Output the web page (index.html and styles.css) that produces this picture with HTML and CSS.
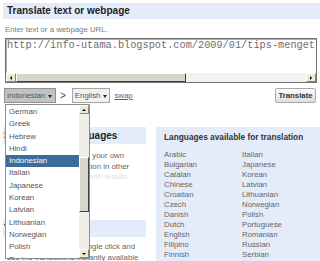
FILE: index.html
```html
<!DOCTYPE html>
<html>

<head>
  <meta charset='utf-8'>
  <title>Translate text or webpage</title>
  <meta name='viewport' content='width=device-width, initial-scale=1'>
  <link rel="stylesheet" href="styles.css">
</head>

<body>
  <div class="page">
    <h2 class="title-bar">Translate text or webpage</h2>
    <p class="hint">Enter text or a webpage URL.</p>
    <div class="editor">
      <div class="editor-text">http://info-utama.blogspot.com/2009/01/tips-menget</div>
      <div class="hscroll">
        <span class="sb-btn sb-left"></span>
        <span class="sb-thumb"></span>
        <span class="sb-track"></span>
        <span class="sb-btn sb-right"></span>
      </div>
    </div>

    <div class="controls">
      <div class="select open">Indonesian <span class="caret"></span></div>
      <span class="to">&gt;</span>
      <div class="select">English <span class="caret"></span></div>
      <a class="swap" href="#">swap</a>
      <button class="translate-btn">Translate</button>
    </div>

    <div class="columns">
      <div class="left-col">
        <h3 class="left-bar">Search other languages</h3>
        <p class="left-text">
          Search for answers with your own<br>
          terms and see a translation in other<br>
          <span class="faint">languages side by side with results</span>
        </p>
        <h3 class="left-bar second">Tools</h3>
        <p class="left-text tight">
          Translate sites with a single click and<br>
          see the translations instantly available
        </p>
      </div>
      <div class="lang-box">
        <h3>Languages available for translation</h3>
        <div class="lang-lists">
          <ul>
            <li>Arabic</li>
            <li>Bulgarian</li>
            <li>Catalan</li>
            <li>Chinese</li>
            <li>Croatian</li>
            <li>Czech</li>
            <li>Danish</li>
            <li>Dutch</li>
            <li>English</li>
            <li>Filipino</li>
            <li>Finnish</li>
            <li>French</li>
          </ul>
          <ul>
            <li>Italian</li>
            <li>Japanese</li>
            <li>Korean</li>
            <li>Latvian</li>
            <li>Lithuanian</li>
            <li>Norwegian</li>
            <li>Polish</li>
            <li>Portuguese</li>
            <li>Romanian</li>
            <li>Russian</li>
            <li>Serbian</li>
            <li>Slovak</li>
          </ul>
        </div>
      </div>
    </div>

    <!-- open list of the "from" select -->
    <div class="dropdown">
      <ul class="dropdown-items">
        <li>German</li>
        <li>Greek</li>
        <li>Hebrew</li>
        <li>Hindi</li>
        <li class="selected">Indonesian</li>
        <li>Italian</li>
        <li>Japanese</li>
        <li>Korean</li>
        <li>Latvian</li>
        <li>Lithuanian</li>
        <li>Norwegian</li>
        <li>Polish</li>
        <li>Portuguese</li>
      </ul>
      <div class="vscroll">
        <span class="vs-btn vs-up"></span>
        <span class="vs-gap"></span>
        <span class="vs-thumb"></span>
        <span class="vs-track"></span>
        <span class="vs-btn vs-down"></span>
      </div>
    </div>
  </div>
</body>

</html>
```

FILE: styles.css
```css
* {
  box-sizing: border-box;
  margin: 0;
  padding: 0;
}

body {
  font-family: "Liberation Sans", Arial, sans-serif;
  font-size: 7.8px;
  color: #666;
  background: #fff;
  overflow: hidden;
}

.page {
  position: relative;
  padding: 3px 0 0 3px;
}

.title-bar {
  background: #e5ecf9;
  height: 16px;
  line-height: 16px;
  padding-left: 4px;
  font-size: 10px;
  font-weight: bold;
  color: #222;
}

.hint {
  margin: 6px 0 0 2px;
  line-height: 10px;
  color: #7a7a7a;
}

/* text area */
.editor {
  display: flex;
  flex-direction: column;
  margin: 3px 0 0 2px;
  width: 312px;
  height: 45px;
  border: 1px solid #707070;
  box-shadow: inset 1px 1px 0 #b0b0b0;
}

.editor-text {
  flex: 1;
  padding: 1px 0 0 1px;
  font-family: "Liberation Mono", monospace;
  font-size: 10.27px;
  line-height: 10px;
  color: #6e6e6e;
  white-space: nowrap;
  overflow: hidden;
}

.hscroll {
  display: flex;
  height: 9px;
  background: #f3f2ec;
}

.sb-btn,
.vs-btn {
  position: relative;
  background: #ece9d8;
  border: 1px solid;
  border-color: #fff #8a877c #8a877c #fff;
}

.sb-btn {
  width: 10px;
}

.sb-btn::after,
.vs-btn::after {
  content: "";
  position: absolute;
  left: 50%;
  top: 50%;
  border: 2px solid transparent;
}

.sb-left::after {
  margin: -2px 0 0 -3px;
  border-right-color: #000;
}

.sb-right::after {
  margin: -2px 0 0 -1px;
  border-left-color: #000;
}

.sb-thumb {
  width: 170px;
  background: #d8d5cc;
  border: 1px solid;
  border-color: #fff #404040 #404040 #fff;
}

.sb-track {
  flex: 1;
}

/* selects row */
.controls {
  display: flex;
  align-items: center;
  margin: 5px 0 0 1px;
  padding-right: 4px;
  height: 15px;
}

.select {
  display: flex;
  align-items: center;
  gap: 3px;
  height: 15px;
  padding: 0 2px;
  border: 1px solid #a5a5a5;
  background: #f1f1f1;
  color: #555;
}

.select.open {
  width: 52px;
  background: #c2c2c2;
  border-color: #909090;
}

.caret {
  border: 2.5px solid transparent;
  border-top: 3px solid #222;
  margin-top: 3px;
}

.to {
  margin: 0 6px 0 4px;
  font-size: 10px;
  color: #444;
}

.swap {
  margin-left: 4px;
  color: #6b4fa0;
}

.translate-btn {
  margin-left: auto;
  width: 41px;
  height: 15px;
  font-family: inherit;
  font-size: 7.8px;
  font-weight: bold;
  color: #333;
  background: linear-gradient(#fcfcfc, #dedede);
  border: 1px solid #a8a8a8;
  border-radius: 2px;
}

/* lower part */
.columns {
  display: flex;
  gap: 10px;
  margin-top: 24px;
}

.left-col {
  width: 150px;
}

.left-bar {
  background: #e5ecf9;
  height: 17px;
  line-height: 17px;
  padding-left: 1px;
  font-size: 10px;
  font-weight: bold;
  color: #222;
  white-space: nowrap;
  overflow: hidden;
}

.left-bar.second {
  margin-top: 37px;
}

.left-text {
  margin-top: 7px;
  padding-left: 4px;
  line-height: 10.5px;
  white-space: nowrap;
}

.left-text.tight {
  margin-top: 5.5px;
}

.faint {
  color: #e2e2e2;
}

.lang-box {
  flex: 1;
  height: 200px;
  padding: 5px 0 0 8px;
  background: #e5ecf9;
}

.lang-box h3 {
  font-size: 8.3px;
  line-height: 10px;
  font-weight: bold;
  color: #333;
}

.lang-lists {
  display: flex;
  margin-top: 7.7px;
}

.lang-lists ul {
  list-style: none;
  width: 78px;
  line-height: 10px;
}

/* opened dropdown */
.dropdown {
  position: absolute;
  left: 5px;
  top: 104px;
  width: 85px;
  height: 155px;
  display: flex;
  background: #fff;
  border: 1px solid #8c8c8c;
}

.dropdown-items {
  flex: 1;
  list-style: none;
  padding-top: 1px;
  overflow: hidden;
}

.dropdown-items li {
  height: 12.3px;
  line-height: 12.3px;
  padding-left: 3px;
  color: #555;
}

.dropdown-items li.selected {
  background: #3b6c9d;
  color: #fff;
}

.vscroll {
  display: flex;
  flex-direction: column;
  width: 10px;
  background: #efeee8;
}

.vs-btn {
  height: 9px;
}

.vs-up::after {
  margin: -3px 0 0 -2px;
  border-bottom-color: #000;
}

.vs-down::after {
  margin: -1px 0 0 -2px;
  border-top-color: #000;
}

.vs-gap {
  height: 43px;
}

.vs-thumb {
  height: 55px;
  background: #d8d5cc;
  border: 1px solid;
  border-color: #fff #404040 #404040 #fff;
}

.vs-track {
  flex: 1;
}
```
